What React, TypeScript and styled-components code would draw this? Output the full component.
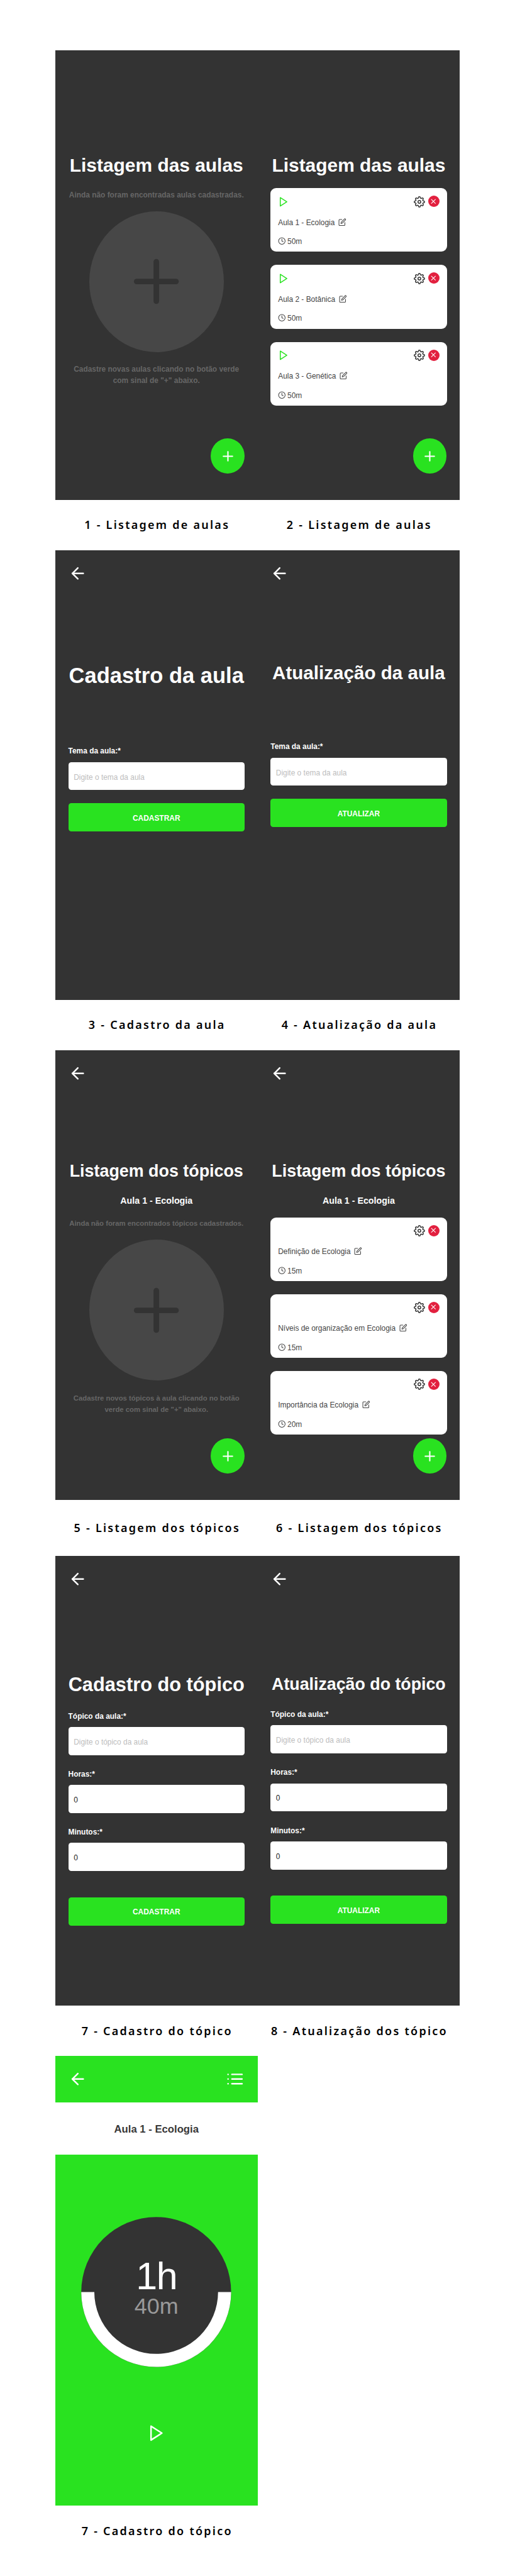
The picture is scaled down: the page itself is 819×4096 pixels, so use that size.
import React from "react";
import styled, { createGlobalStyle } from "styled-components";
import { FiSettings, FiEdit, FiClock, FiPlay, FiPlus, FiArrowLeft, FiList, FiX } from "react-icons/fi";

const green = "#29e220";
const dark = "#333333";

const GlobalStyle = createGlobalStyle`
  * { box-sizing: border-box; }
  body { margin: 0; background: #fff; }
  svg { display: block; flex: none; }
`;

const Board = styled.main`
  width: 820px;
  height: 4100px;
  zoom: 0.99902;
  padding: 80px 88px 0;
  background: #fff;
  font-family: "Liberation Sans", Arial, sans-serif;
  overflow: hidden;
`;

const Row = styled.section`
  display: grid;
  grid-template-columns: 322px 322px;
`;

const Phone = styled.div<{ $bg?: string }>`
  position: relative;
  display: flex;
  flex-direction: column;
  height: 715.6px;
  padding: 0 20.7px;
  background: ${(p) => p.$bg ?? dark};
`;

const Caption = styled.h4<{ $height?: number; $line?: number }>`
  margin: 0;
  height: ${(p) => p.$height ?? 80}px;
  line-height: ${(p) => p.$line ?? 80}px;
  padding-left: 2px;
  text-align: center;
  white-space: nowrap;
  font-family: "Noto Sans", sans-serif;
  font-size: 18px;
  font-weight: 600;
  letter-spacing: 2.27px;
  color: #000;
`;

const TopBar = styled.header`
  display: flex;
  align-items: center;
  justify-content: space-between;
  height: 74px;
  flex: none;
  color: #fff;
  font-size: 29.6px;
`;

const Title = styled.h1<{ $size: number; $top: number }>`
  height: 40px;
  margin: ${(p) => p.$top}px -10px 0;
  font-size: ${(p) => p.$size}px;
  line-height: 42px;
  font-weight: 700;
  text-align: center;
  white-space: nowrap;
  color: #fff;
`;

const Subtitle = styled.h2`
  height: 20px;
  margin: 16.4px 0 0;
  font-size: 14.3px;
  line-height: 22px;
  text-align: center;
  color: #fff;
`;

const Hint = styled.p<{ $size: number; $top: number }>`
  margin: ${(p) => p.$top}px -10px 0;
  font-size: ${(p) => p.$size}px;
  line-height: 18px;
  font-weight: 700;
  text-align: center;
  white-space: nowrap;
  color: #666;
`;

const EmptyMark = styled.div`
  display: flex;
  align-items: center;
  justify-content: center;
  align-self: center;
  flex: none;
  width: 214.7px;
  height: 224.3px;
  margin-top: 16px;
  border-radius: 50%;
  background: #474747;
  color: ${dark};
  font-size: 107.3px;
`;

const AddButton = styled.button`
  position: absolute;
  top: 618px;
  right: 20.8px;
  display: flex;
  align-items: center;
  justify-content: center;
  width: 53.7px;
  height: 56px;
  padding: 0;
  border: 0;
  border-radius: 50%;
  background: ${green};
  color: #fff;
  font-size: 25px;
`;

const Cards = styled.div`
  display: flex;
  flex-direction: column;
  gap: 21px;
  margin-top: 17.1px;
`;

const Card = styled.article`
  height: 101.3px;
  padding: 12px 12px 0;
  border-radius: 9px;
  background: #fff;
  color: #444;
  font-size: 11.95px;
  line-height: 18px;
`;

const CardActions = styled.div`
  display: flex;
  align-items: center;
  height: 18px;
  color: ${dark};
  font-size: 17.9px;
`;

const PlayIcon = styled(FiPlay)`
  color: ${green};
  margin-top: 1px;
`;

const GearIcon = styled(FiSettings)`
  margin: 1px 4.5px 0 auto;
`;

const Remove = styled.span`
  display: flex;
  align-items: center;
  justify-content: center;
  width: 18px;
  height: 18px;
  border-radius: 50%;
  background: #e2203f;
  color: #fff;
  font-size: 12.5px;
`;

const CardLine = styled.div<{ $top: number; $gap: number }>`
  display: flex;
  align-items: center;
  gap: ${(p) => p.$gap}px;
  height: 18px;
  margin-top: ${(p) => p.$top}px;
  white-space: nowrap;
  svg { margin-bottom: 1px; }
  span { padding-top: 2.3px; }
`;

const Form = styled.form<{ $top: number }>`
  display: flex;
  flex-direction: column;
  margin-top: ${(p) => p.$top}px;
`;

const Field = styled.label`
  display: block;
  padding-top: 1.1px;
  margin-bottom: 21.2px;
  font-size: 11.95px;
  line-height: 18px;
  font-weight: 700;
  color: #fff;
`;

const Input = styled.input`
  display: block;
  width: 100%;
  height: 44.7px;
  margin-top: 7.4px;
  padding: 3px 8.6px 0;
  border: 0;
  border-radius: 4.5px;
  background: #fff;
  color: #222;
  font: 11.95px "Liberation Sans", Arial, sans-serif;
  &::placeholder { color: #bdbdbd; opacity: 1; }
`;

const Submit = styled.button<{ $gap?: number }>`
  height: 44.8px;
  margin-top: ${(p) => p.$gap ?? -0.6}px;
  padding: 2.2px 0 0;
  border: 0;
  border-radius: 4.5px;
  background: ${green};
  color: #fff;
  font: 700 11.95px "Liberation Sans", Arial, sans-serif;
`;

const LessonBand = styled.h3`
  height: 83px;
  margin: 0 -20.7px;
  background: #fff;
  color: #383838;
  font-size: 16.7px;
  line-height: 87px;
  text-align: center;
`;

const Timer = styled.div`
  display: grid;
  place-items: center;
  align-self: center;
  flex: none;
  width: 239px;
  height: 239px;
  margin-top: 99.5px;
  & > * { grid-area: 1 / 1; }
`;

const Clock = styled.div`
  display: flex;
  flex-direction: column;
  align-items: center;
  padding-bottom: 15px;
`;

const Hours = styled.span`
  color: #fff;
  font-size: 61px;
  line-height: 61px;
  letter-spacing: -1.5px;
`;

const Minutes = styled.span`
  color: #999;
  font-size: 36px;
  line-height: 34.6px;
`;

const StartIcon = styled(FiPlay)`
  align-self: center;
  margin-top: 90.7px;
  color: #fff;
  font-size: 29.6px;
`;

const Back = () => (
  <TopBar>
    <FiArrowLeft />
  </TopBar>
);

const Add = () => (
  <AddButton>
    <FiPlus />
  </AddButton>
);

type Item = { name: string; time: string };

function CardList({ items, playable }: { items: Item[]; playable?: boolean }) {
  return (
    <Cards>
      {items.map((item) => (
        <Card key={item.name}>
          <CardActions>
            {playable && <PlayIcon />}
            <GearIcon />
            <Remove>
              <FiX />
            </Remove>
          </CardActions>
          <CardLine $top={15.2} $gap={5.6}>
            <span>{item.name}</span>
            <FiEdit size={12.6} />
          </CardLine>
          <CardLine $top={12.7} $gap={2.3}>
            <FiClock size={12.5} />
            <span>{item.time}</span>
          </CardLine>
        </Card>
      ))}
    </Cards>
  );
}

function LessonForm({ top, action }: { top: number; action: string }) {
  return (
    <Form $top={top}>
      <Field>
        Tema da aula:*
        <Input placeholder="Digite o tema da aula" />
      </Field>
      <Submit>{action}</Submit>
    </Form>
  );
}

function TopicForm({ top, action }: { top: number; action: string }) {
  return (
    <Form $top={top}>
      <Field>
        Tópico da aula:*
        <Input placeholder="Digite o tópico da aula" />
      </Field>
      <Field>
        Horas:*
        <Input defaultValue="0" />
      </Field>
      <Field>
        Minutos:*
        <Input defaultValue="0" />
      </Field>
      <Submit $gap={20.6}>{action}</Submit>
    </Form>
  );
}

const lessons: Item[] = [
  { name: "Aula 1 - Ecologia", time: "50m" },
  { name: "Aula 2 - Botânica", time: "50m" },
  { name: "Aula 3 - Genética", time: "50m" },
];

const topics: Item[] = [
  { name: "Definição de Ecologia", time: "15m" },
  { name: "Níveis de organização em Ecologia", time: "15m" },
  { name: "Importância da Ecologia", time: "20m" },
];

export default function App() {
  return (
    <>
      <GlobalStyle />
      <Board>
        <Row>
          <Phone>
            <TopBar />
            <Title $size={29.95} $top={88.5}>Listagem das aulas</Title>
            <Hint $size={11.93} $top={19.4}>Ainda não foram encontradas aulas cadastradas.</Hint>
            <EmptyMark><FiPlus /></EmptyMark>
            <Hint $size={11.95} $top={19.7}>
              Cadastre novas aulas clicando no botão verde
              <br />
              com sinal de "+" abaixo.
            </Hint>
            <Add />
          </Phone>
          <Phone>
            <TopBar />
            <Title $size={29.95} $top={88.5}>Listagem das aulas</Title>
            <CardList items={lessons} playable />
            <Add />
          </Phone>
          <Caption>1 - Listagem de aulas</Caption>
          <Caption>2 - Listagem de aulas</Caption>
        </Row>

        <Row>
          <Phone>
            <Back />
            <Title $size={34.6} $top={105}>Cadastro da aula</Title>
            <LessonForm top={92} action="CADASTRAR" />
          </Phone>
          <Phone>
            <Back />
            <Title $size={29.65} $top={100.2}>Atualização da aula</Title>
            <LessonForm top={89.8} action="ATUALIZAR" />
          </Phone>
          <Caption $height={80.4} $line={79}>3 - Cadastro da aula</Caption>
          <Caption $height={80.4} $line={79}>4 - Atualização da aula</Caption>
        </Row>

        <Row>
          <Phone>
            <Back />
            <Title $size={26.9} $top={98.5}>Listagem dos tópicos</Title>
            <Subtitle>Aula 1 - Ecologia</Subtitle>
            <Hint $size={11.35} $top={18.8}>Ainda não foram encontrados tópicos cadastrados.</Hint>
            <EmptyMark><FiPlus /></EmptyMark>
            <Hint $size={11.36} $top={19.7}>
              Cadastre novos tópicos à aula clicando no botão
              <br />
              verde com sinal de "+" abaixo.
            </Hint>
            <Add />
          </Phone>
          <Phone>
            <Back />
            <Title $size={26.9} $top={98.5}>Listagem dos tópicos</Title>
            <Subtitle>Aula 1 - Ecologia</Subtitle>
            <CardList items={topics} />
            <Add />
          </Phone>
          <Caption $height={89.3} $line={89.3}>5 - Listagem dos tópicos</Caption>
          <Caption $height={89.3} $line={89.3}>6 - Listagem dos tópicos</Caption>
        </Row>

        <Row>
          <Phone>
            <Back />
            <Title $size={30.8} $top={110.4}>Cadastro do tópico</Title>
            <TopicForm top={21.3} action="CADASTRAR" />
          </Phone>
          <Phone>
            <Back />
            <Title $size={26.8} $top={110}>Atualização do tópico</Title>
            <TopicForm top={19.1} action="ATUALIZAR" />
          </Phone>
          <Caption $line={81}>7 - Cadastro do tópico</Caption>
          <Caption $line={81}>8 - Atualização dos tópico</Caption>
        </Row>

        <Row>
          <Phone $bg={green}>
            <TopBar>
              <FiArrowLeft />
              <FiList />
            </TopBar>
            <LessonBand>Aula 1 - Ecologia</LessonBand>
            <Timer>
              <svg width="239" height="239" viewBox="0 0 239 239">
                <circle cx="119.5" cy="119.5" r="119.3" fill={dark} />
                <path d="M0.2 119.5A119.3 119.3 0 0 0 238.8 119.5H218A98.5 98.5 0 0 1 21 119.5Z" fill="#fff" />
              </svg>
              <Clock>
                <Hours>1h</Hours>
                <Minutes>40m</Minutes>
              </Clock>
            </Timer>
            <StartIcon />
          </Phone>
          <div />
          <Caption $line={82}>7 - Cadastro do tópico</Caption>
        </Row>
      </Board>
    </>
  );
}
